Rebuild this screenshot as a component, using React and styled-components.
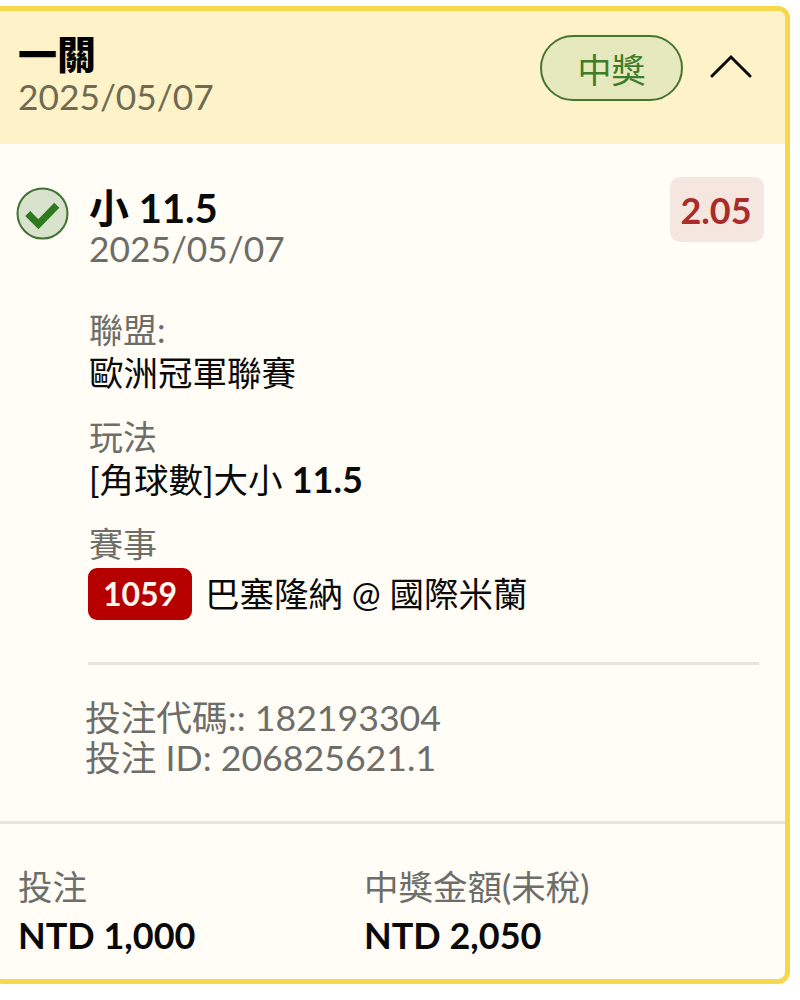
import React from 'react';
import styled, { createGlobalStyle } from 'styled-components';

const GlobalStyle = createGlobalStyle`
  html, body {
    margin: 0;
    padding: 0;
    background: #fff;
    overflow: hidden;
  }
  body {
    font-family: Lato, "Noto Sans CJK TC", sans-serif;
    color: #0a0a0a;
  }
`;

const Page = styled.div`
  width: 800px;
  height: 1000px;
  padding-top: 6px;
  box-sizing: border-box;
`;

const Card = styled.div`
  width: 800px;
  height: 978px;
  margin-left: -10px;
  box-sizing: border-box;
  border: 5px solid #f6d84c;
  border-radius: 12px;
  background: #fffdf6;
  overflow: hidden;
  display: flex;
  flex-direction: column;
`;

const Header = styled.div`
  height: 133px;
  flex: none;
  background: #fef2c9;
  display: flex;
  justify-content: space-between;
  padding: 19px 32px 0 23px;
  box-sizing: border-box;
`;

const HeaderTitle = styled.div`
  font-size: 39px;
  line-height: 48px;
  font-weight: 900;
  color: #000;
`;

const HeaderDate = styled.div`
  font-size: 35.3px;
  line-height: 38px;
  color: #6f6a52;
`;

const HeaderRight = styled.div`
  display: flex;
  align-items: flex-start;
  gap: 26px;
`;

const StatusPill = styled.div`
  width: 143px;
  height: 66px;
  margin-top: 5px;
  box-sizing: border-box;
  border: 2px solid #47752f;
  border-radius: 33px;
  background: #e6e8bd;
  color: #3f7c2a;
  font-size: 34px;
  display: flex;
  align-items: center;
  justify-content: center;
`;

const Chevron = styled.svg`
  width: 44px;
  height: 26px;
  margin-top: 22px;
`;

const Body = styled.div`
  flex: 1;
  padding: 33px 21px 0 22px;
  display: flex;
  flex-direction: column;
`;

const BetRow = styled.div`
  display: flex;
  align-items: flex-start;
`;

const CheckMark = styled.svg`
  width: 53px;
  height: 53px;
  flex: none;
  margin-top: 10px;
  margin-left: -1px;
  margin-right: 20px;
`;

const BetMain = styled.div`
  flex: 1;
`;

const BetName = styled.div`
  font-size: 40px;
  line-height: 43px;
  margin-top: 10px;
  font-weight: 700;
  color: #0a0a0a;
`;

const BetDate = styled.div`
  font-size: 35.3px;
  line-height: 38px;
  color: #6c6c68;
`;

const Odds = styled.div`
  width: 94px;
  height: 65px;
  border-radius: 10px;
  background: #f5e6e0;
  color: #ab2b2b;
  font-size: 36px;
  font-weight: 700;
  display: flex;
  align-items: center;
  justify-content: center;
  padding-right: 2px;
  box-sizing: border-box;
`;

const Details = styled.div`
  padding-left: 72px;
  margin-top: 40px;
  display: flex;
  flex-direction: column;
  gap: 21px;
`;

const DetailBlock = styled.div`
  display: flex;
  flex-direction: column;
`;

const DetailLabel = styled.div`
  font-size: 34px;
  line-height: 43px;
  color: #6d6d69;
`;

const DetailValue = styled.div`
  font-size: 34.5px;
  line-height: 43px;
  color: #0a0a0a;
  display: flex;
  align-items: center;

  b {
    font-weight: 700;
    margin-left: 9px;
    font-size: 36px;
  }
`;

const MatchRow = styled(DetailValue)`
  line-height: 52px;
  margin-top: 3px;
  margin-left: -1px;
`;

const MatchCode = styled.span`
  width: 104px;
  height: 52px;
  background: #b60000;
  border-radius: 9px;
  color: #fff6ee;
  font-size: 32px;
  font-weight: 700;
  display: inline-flex;
  align-items: center;
  justify-content: center;
  margin-right: 13px;
`;

const Rule = styled.div`
  height: 3px;
  margin: 42px 5px 0 71px;
  background: #e6e4dc;
`;

const Codes = styled.div`
  padding-left: 68px;
  margin-top: 33px;
  font-size: 35.7px;
  line-height: 40px;
  color: #6d6d69;
`;

const Footer = styled.div`
  height: 158px;
  flex: none;
  border-top: 3px solid #e6e4dc;
  box-sizing: border-box;
  display: grid;
  grid-template-columns: 346px 1fr;
  padding: 39px 23px 0;
`;

const Stat = styled.div`
  display: flex;
  flex-direction: column;
`;

const StatLabel = styled.div`
  font-size: 34.5px;
  line-height: 48px;
  color: #6d6d69;
`;

const StatValue = styled.div`
  font-size: 36px;
  line-height: 48px;
  font-weight: 700;
  color: #0a0a0a;
`;

export default function App() {
  return (
    <Page>
      <GlobalStyle />
      <Card>
        <Header>
          <div>
            <HeaderTitle>一關</HeaderTitle>
            <HeaderDate>2025/05/07</HeaderDate>
          </div>
          <HeaderRight>
            <StatusPill>中獎</StatusPill>
            <Chevron viewBox="0 0 44 26" fill="none">
              <path d="M3 24 L22 5 L41 24" stroke="#0a0a0a" strokeWidth="3" strokeLinecap="round" strokeLinejoin="miter" />
            </Chevron>
          </HeaderRight>
        </Header>
        <Body>
          <BetRow>
            <CheckMark viewBox="0 0 52 52" fill="none">
              <circle cx="26" cy="26" r="24.5" fill="#d8e2cd" stroke="#3f7431" strokeWidth="2" />
              <path d="M11.5 26 L22 36.5 L40 18" stroke="#2f7a1f" strokeWidth="7" strokeLinecap="butt" strokeLinejoin="miter" />
            </CheckMark>
            <BetMain>
              <BetName>小 11.5</BetName>
              <BetDate>2025/05/07</BetDate>
            </BetMain>
            <Odds>2.05</Odds>
          </BetRow>
          <Details>
            <DetailBlock>
              <DetailLabel>聯盟:</DetailLabel>
              <DetailValue>歐洲冠軍聯賽</DetailValue>
            </DetailBlock>
            <DetailBlock>
              <DetailLabel>玩法</DetailLabel>
              <DetailValue>[角球數]大小<b>11.5</b></DetailValue>
            </DetailBlock>
            <DetailBlock>
              <DetailLabel>賽事</DetailLabel>
              <MatchRow><MatchCode>1059</MatchCode>巴塞隆納 @ 國際米蘭</MatchRow>
            </DetailBlock>
          </Details>
          <Rule />
          <Codes>
            <div>投注代碼:: 182193304</div>
            <div>投注 ID: 206825621.1</div>
          </Codes>
        </Body>
        <Footer>
          <Stat>
            <StatLabel>投注</StatLabel>
            <StatValue>NTD 1,000</StatValue>
          </Stat>
          <Stat>
            <StatLabel>中獎金額(未稅)</StatLabel>
            <StatValue>NTD 2,050</StatValue>
          </Stat>
        </Footer>
      </Card>
    </Page>
  );
}
